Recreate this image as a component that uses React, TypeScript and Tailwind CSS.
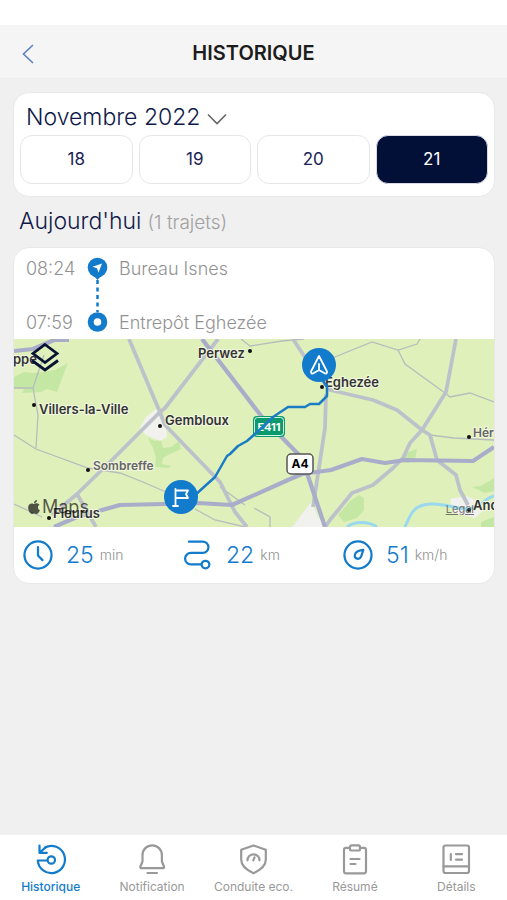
import React, { useState } from 'react';
import { FaApple } from 'react-icons/fa';

type Stat = { value: string; unit: string; icon: React.ReactNode };
type Tab = { id: string; label: string; icon: React.ReactNode };
type Label = { text: string; x: number; y: number; size: string; dot?: [number, number] };

const days = ['18', '19', '20', '21'];

const stats: Stat[] = [
  {
    value: '25',
    unit: 'min',
    icon: <><circle cx="15" cy="15" r="12.7" /><path d="M15 7.5v8l4.2 4.3" /></>,
  },
  {
    value: '22',
    unit: 'km',
    icon: <><path d="M6.5 2.5h13a5.3 5.3 0 0 1 0 10.6H8.3a5.4 5.4 0 0 0 0 10.8h10" /><circle cx="22" cy="24" r="3.6" /></>,
  },
  {
    value: '51',
    unit: 'km/h',
    icon: <><circle cx="15" cy="15" r="12.7" /><path d="M20 10.3c-4.2.5-7.7 2.2-8 5a3 3 0 0 0 5.8 1.3c.9-1.7 1.2-4 2.2-6.3Z" /></>,
  },
];

const tabs: Tab[] = [
  {
    id: 'historique',
    label: 'Historique',
    icon: <><path d="M10 4.5A13.6 13.6 0 1 1 2.8 17.5h9.6" /><circle cx="16.3" cy="17" r="3.7" /><path d="M4.5 2.5v7.3h7.3M4.8 9.500l5.500-4.800" /></>,
  },
  {
    id: 'notification',
    label: 'Notification',
    icon: <><path d="M6.500 18.500V12a9.700 9.700 0 0 1 19.400 0v6.500l2.200 5.200a1.200 1.200 0 0 1-1.200 1.500H5.500a1.200 1.200 0 0 1-1.200-1.500Z" /><path d="M11.500 30h9.500" /></>,
  },
  {
    id: 'conduite',
    label: 'Conduite eco.',
    icon: <><path d="M16.500 2.500 28.800 6.700v10c0 6-5.500 10.300-12.300 13.500C9.700 27 4.200 22.700 4.200 16.700v-10Z" /><path d="M10.500 17.300a6 6 0 1 1 12 0M16.300 17.300l1.200-3" /></>,
  },
  {
    id: 'resume',
    label: 'Résumé',
    icon: <><rect x="5" y="4.800" width="22" height="25.500" rx="2" /><rect x="11" y="2.300" width="10" height="5.200" rx="1.600" fill="white" /><path d="M11.500 16h9M11.500 21h5" /></>,
  },
  {
    id: 'details',
    label: 'Détails',
    icon: <><rect x="3.500" y="2.500" width="25.500" height="27.500" rx="2" /><path d="M3.500 23.300H29M10.800 11v6M16 11.200h6M16 16.700h6" /></>,
  },
];

const labels: Label[] = [
  { text: 'ppe', x: -1, y: 25, size: 'text-[13px] fill-[#333]' },
  { text: 'Perwez', x: 184, y: 19, size: 'text-[13px] fill-[#333]', dot: [236, 12] },
  { text: 'Eghezée', x: 311, y: 48, size: 'text-[13px] fill-[#333]', dot: [308, 48] },
  { text: 'Villers-la-Ville', x: 25, y: 75, size: 'text-[13px] fill-[#333]', dot: [20, 66] },
  { text: 'Gembloux', x: 151, y: 86, size: 'text-[13px] fill-[#333]', dot: [146, 87] },
  { text: 'Sombreffe', x: 79, y: 131, size: 'text-[12px] fill-[#666]', dot: [74, 131] },
  { text: 'Fleurus', x: 39, y: 179, size: 'text-[13px] fill-[#333]', dot: [35, 179] },
  { text: 'Hér', x: 459, y: 98, size: 'text-[12px] fill-[#666]', dot: [455, 98] },
  { text: 'And', x: 459, y: 171, size: 'text-[13px] fill-[#333]', dot: [455, 171] },
];

const TripMap: React.FC = () => (
  <div className="relative">
    <svg viewBox="0 0 480 188" preserveAspectRatio="xMidYMid slice" className="block h-[188px] w-full bg-[#e0f0bb]" role="img" aria-label="Carte du trajet">
      {/* woods */}
      <g fill="#c4e8a4">
        <path d="M29 33 41 31 54 24 50 34 43 53 33 50 27 53 8 54 10 50 0 49V38L10 33 19 34Z" />
        <path d="M134 99l7 3 6-1 2 8 8-1 8-6 2 8-13 6-5 3-1 6 9 2-3 2-13-1 1-9-3-10Z" />
        <path d="M384 122l7-8 12-4-2 11-7 3Z" />
        <path d="M324 176l12-14 9-6 5 3v12l-7 8-13 4Z" />
        <path d="M458 148l9-1 13-8v13l-9 2Z" />
        <path d="M467 183l13-5v10h-13Z" />
      </g>
      {/* built-up areas */}
      <g fill="#f1f1ee">
        <path d="M142 70l-10 8-6 11 6 7 14 6 7-4-1-12-5-13Z" />
        <path d="M278 188l20-26 5 14 8 12Z" />
        <path d="M436 160l16-3 12 5 6 9-9 8-22-5Z" />
      </g>
      {/* rivers */}
      <g fill="none" stroke="#9ad8ef" strokeWidth="3">
        <path d="M391 188C397 174 400 166 416 165s24 5 37 5 16-10 27-13" />
        <path d="M333 188c7-6 22-6 30 0" />
      </g>
      {/* local roads */}
      <g fill="none" stroke="#b7bcbd" strokeWidth="1.300">
        <path d="M30 16 19 49 21 60 24 76 22 109M0 49h19" />
        <path d="M0 96 22 110 74 129 106 134 129 143 152 153" />
        <path d="M0 165 28 178M206 148 231 166M240 169 256 178V188M181 170 201 181 231 188" />
        <path d="M227 0 236 7 268 2 290 0M316 20 358 3 384 11 403 5 406 0" />
        <path d="M384 11 391 25 431 54 436 58 456 54 480 63M416 96l24 3 40 2" />
      </g>
      {/* main roads */}
      <g fill="none" stroke="#bdc1ca" strokeWidth="3.800" strokeLinejoin="round">
        <path d="M115 0 145 71M204 0 151 69 146 73 96 123 63 155 38 176M63 155 82 188" />
        <path d="M145 71 151 86 206 143 221 173 233 188" />
        <path d="M279 0 294 23 316 51 359 61 383 71 408 91 416 96 423 121 442 136 446 151 454 166" />
        <path d="M312 55 311 89 299 168" />
        <path d="M442 0 432 53 408 91 396 104 389 119 379 129 359 146 338 154 316 181 311 188" />
      </g>
      {/* motorways */}
      <g fill="none" stroke="#a9adc9" strokeWidth="4.200" strokeLinejoin="round">
        <path d="M0 12 19 10 40 1H55M188 0 248 78 288 119 311 188" />
        <path d="M40 188 63 178 106 166 150 165 184 164 218 166 274 141 288 135 317 131 348 120 371 124 391 121 459 122 480 108" />
      </g>
      {labels.map(l => (
        <g key={l.text}>
          {l.dot ? <circle cx={l.dot[0]} cy={l.dot[1]} r="2" fill="#111" /> : null}
          <text x={l.x} y={l.y} stroke="#f1f7df" strokeWidth="2" paintOrder="stroke" className={`font-semibold ${l.size}`}>{l.text}</text>
        </g>
      ))}
      {/* road shields */}
      <rect x="239" y="77" width="32" height="21" rx="4" fill="#0b9a6d" />
      <rect x="240.500" y="78.500" width="29" height="18" rx="3" fill="none" stroke="#d7f5e5" />
      <text x="255" y="92" textAnchor="middle" className="fill-white text-[11px] font-bold">E411</text>
      <rect x="273" y="115" width="26" height="20" rx="4" fill="white" stroke="#555" strokeWidth="1.500" />
      <text x="286" y="129" textAnchor="middle" className="fill-black text-[12px] font-bold">A4</text>
      {/* trip */}
      <path d="M180 157 201 138 213 117 216 115 224 107 233 102 251 86 259 78 274 68H291L296 65H305L313 57V48L308 40" fill="none" stroke="#1b7cc6" strokeWidth="2.500" strokeLinejoin="round" />
      <g fill="none" stroke="white" strokeWidth="1.800" strokeLinejoin="round" strokeLinecap="round">
        <circle cx="305" cy="26" r="17" fill="#127bcb" stroke="none" />
        <path d="M305 17 297 32.500Q297 35 299 34.500L305 31 311 34.500Q313 35 313 32.500ZM305 25v6" />
        <circle cx="167" cy="158" r="17" fill="#127bcb" stroke="none" />
        <path d="M161.500 150v17M159 167h5M161.500 151.500H174l-2 3.500 2 4h-12.500" />
      </g>
    </svg>
    <button type="button" aria-label="Calques" className="absolute left-4 top-1">
      <svg viewBox="0 0 30 30" className="size-[30px]" fill="none" stroke="#071332" strokeWidth="2.800">
        <path d="M15 1.500 27 10.500 15 19.500 3 10.500Z" />
        <path d="M2 17.500 15 27 28 17.500" />
      </svg>
    </button>
    <div className="absolute bottom-2 left-3 flex items-center text-lg leading-6 text-black/65">
      <FaApple className="size-4" />
      <span>Maps</span>
    </div>
    <a href="#legal" className="absolute bottom-2 right-5 text-[11px] leading-5 text-[#555]/80 underline">Legal</a>
  </div>
);

export default function App() {
  const [day, setDay] = useState('21');
  const [tab, setTab] = useState('historique');

  return (
    <div className="flex min-h-screen flex-col bg-[#f0f0f0] font-['Inter','Liberation_Sans',sans-serif]">
      <header className="border-b border-[#ededed] bg-[#f5f5f5]">
        <div className="h-[25px] bg-white" />
        <div className="grid h-[53px] grid-cols-[56px_1fr_56px] items-center">
          <button type="button" aria-label="Retour" className="flex h-full items-center pl-[22px] pt-1">
            <svg viewBox="0 0 12 20" className="h-5 w-3" fill="none" stroke="#5b80bd" strokeWidth="1.600">
              <path d="M11 1 1.500 10 11 19" />
            </svg>
          </button>
          <h1 className="pt-0.5 text-center text-xl font-semibold text-[#1c1c1c]">HISTORIQUE</h1>
        </div>
      </header>

      <main className="pl-[13px] pr-3 pt-[13px]">
        <section className="rounded-2xl border border-[#e8e8e8] bg-white px-1.5 pb-3 pt-2">
          <div className="flex items-center pl-1.5">
            <select aria-label="Mois" className="appearance-none bg-transparent text-[23px] leading-8 font-light text-[#101a4a]">
              <option>Novembre 2022</option>
            </select>
            <svg viewBox="0 0 20 12" className="ml-1.5 mt-1 h-3 w-5" fill="none" stroke="#666" strokeWidth="1.600">
              <path d="M1 1.500 10 10.500 19 1.500" />
            </svg>
          </div>
          <div className="mt-0.5 grid grid-cols-4 gap-1.5">
            {days.map(d => (
              <button key={d} type="button" onClick={() => setDay(d)} aria-pressed={day === d}
                className={`h-[49px] rounded-xl border text-[17px] ${day === d ? 'border-[#d8dbe6] bg-[#020f36] text-white' : 'border-[#e6e6e6] bg-white text-[#1b2355]'}`}>
                {d}
              </button>
            ))}
          </div>
        </section>

        <h2 className="flex items-baseline gap-1.5 py-2 pl-1.5 text-[23px] leading-8 font-light text-[#101a4a]">
          Aujourd'hui
          <span className="text-[19px] text-[#a0a0a0]">(1 trajets)</span>
        </h2>

        <section className="overflow-hidden rounded-2xl border border-[#e8e8e8] bg-white">
          <div className="flex h-[91px] text-lg leading-6 font-light text-[#929292]">
            <div className="flex w-[71px] flex-col justify-between pb-1 pl-3 pt-[9px]">
              <span>08:24</span>
              <span>07:59</span>
            </div>
            <svg viewBox="0 0 24 91" className="h-[91px] w-6" fill="none">
              <path d="M12.500 32v32" stroke="#127bcb" strokeWidth="2.500" strokeDasharray="4 3.500" />
              <path d="m9 28 3.500 4 3.500-4" fill="#127bcb" />
              <circle cx="12.500" cy="19.500" r="9.800" fill="#127bcb" />
              <path d="M17 15.500 7.500 18.800 12 20.200 13.500 24.500Z" fill="white" />
              <circle cx="12.500" cy="74" r="6.800" fill="white" stroke="#127bcb" strokeWidth="6" />
            </svg>
            <div className="flex flex-col justify-between pb-1 pl-2.5 pt-[9px]">
              <span>Bureau Isnes</span>
              <span>Entrepôt Eghezée</span>
            </div>
          </div>
          <TripMap />
          <div className="grid h-14 grid-cols-3">
            {stats.map(s => (
              <div key={s.unit} className="flex items-center pl-2">
                <svg viewBox="0 0 30 30" className="size-8" fill="none" stroke="#127bcb" strokeWidth="2.100" strokeLinecap="round" strokeLinejoin="round">{s.icon}</svg>
                <span className="ml-3 text-[23px] font-light text-[#127bcb]">{s.value}</span>
                <span className="ml-1.5 text-sm font-light text-[#929292]">{s.unit}</span>
              </div>
            ))}
          </div>
        </section>
      </main>

      <nav className="mt-auto grid h-[65px] grid-cols-5 bg-white">
        {tabs.map(t => (
          <a key={t.id} href={`#${t.id}`} onClick={() => setTab(t.id)}
            className={`flex flex-col items-center gap-0.5 pt-2 text-[12px] leading-5 ${tab === t.id ? 'font-medium text-[#127bcb]' : 'text-[#999]'}`}>
            <svg viewBox="0 0 32 32" className="size-8" fill="none" stroke="currentColor" strokeWidth="2.200" strokeLinecap="round" strokeLinejoin="round">{t.icon}</svg>
            <span>{t.label}</span>
          </a>
        ))}
      </nav>
    </div>
  );
}
